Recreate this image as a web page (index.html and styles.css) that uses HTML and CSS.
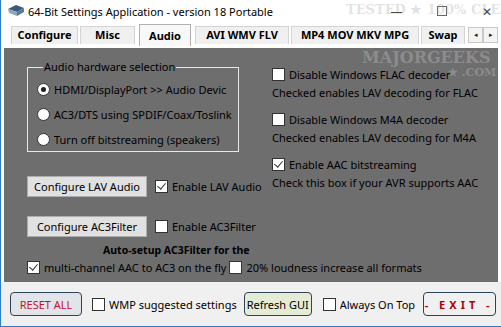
FILE: index.html
```html
<!DOCTYPE html>
<html lang="en">
<head>
    <meta charset="UTF-8">
    <title>64-Bit Settings Application - version 18 Portable</title>
    <link rel="stylesheet" href="styles.css">
</head>
<body>

<div class="window">
    <!-- Title bar -->
    <div class="titlebar">
        <svg class="app-icon" width="18" height="14" viewBox="0 0 18 14">
            <path d="M1 5 L9 1 L17 4 L10 8 Z" fill="#3c5a78"/>
            <path d="M1 5 L10 8 L10 12 L2 9 Z" fill="#8fa8bf"/>
            <path d="M10 8 L17 4 L17 8 L10 12 Z" fill="#5c7896"/>
        </svg>
        <span class="title">64-Bit Settings Application - version 18 Portable</span>
        <div class="controls">
            <span class="ctl">&#8212;</span>
            <span class="ctl"><span class="max"></span></span>
            <span class="ctl close">&#10005;</span>
        </div>
    </div>

    <!-- Tabs -->
    <div class="tabs">
        <div class="tab w-conf">Configure</div>
        <div class="tab w-misc">Misc</div>
        <div class="tab active w-audio">Audio</div>
        <div class="tab w-avi">AVI WMV FLV</div>
        <div class="tab w-mp4">MP4 MOV MKV MPG</div>
        <div class="tab w-swap">Swap</div>
        <div class="tab-arrows">
            <span class="arrow">&#9666;</span>
            <span class="arrow">&#9656;</span>
        </div>
    </div>

    <!-- Audio page -->
    <div class="panel">
        <div class="cols">
            <div class="left">
                <fieldset class="group">
                    <legend>Audio hardware selection</legend>
                    <div class="radio-row"><span class="radio on"></span>HDMI/DisplayPort &gt;&gt; Audio Devic</div>
                    <div class="radio-row"><span class="radio"></span>AC3/DTS using SPDIF/Coax/Toslink</div>
                    <div class="radio-row"><span class="radio"></span>Turn off bitstreaming (speakers)</div>
                </fieldset>

                <div class="btn-row lav">
                    <button class="btn">Configure LAV Audio</button>
                    <span class="check on"></span>Enable LAV Audio
                </div>
                <div class="btn-row ac3">
                    <button class="btn">Configure AC3Filter</button>
                    <span class="check"></span>Enable AC3Filter
                </div>
            </div>

            <div class="right">
                <div class="opt">
                    <div class="check-row"><span class="check"></span>Disable Windows FLAC decoder</div>
                    <div class="hint">Checked enables LAV decoding for FLAC</div>
                </div>
                <div class="opt">
                    <div class="check-row"><span class="check"></span>Disable Windows M4A decoder</div>
                    <div class="hint">Checked enables LAV decoding for M4A</div>
                </div>
                <div class="opt">
                    <div class="check-row"><span class="check on"></span>Enable AAC bitstreaming</div>
                    <div class="hint">Check this box if your AVR supports AAC</div>
                </div>
            </div>
        </div>

        <div class="autosetup">Auto-setup AC3Filter for the following</div>
        <div class="bottom-row">
            <span class="check on"></span>multi-channel AAC to AC3 on the fly
            <span class="check gap"></span>20% loudness increase all formats
        </div>

        <!-- watermark overlay -->
        <div class="wm-big">MAJORGEEKS</div>
        <div class="wm-com">&#9733; .COM</div>
    </div>

    <!-- Footer -->
    <div class="footer">
        <button class="fbtn reset">RESET ALL</button>
        <span class="check"></span><span class="flabel">WMP suggested settings</span>
        <button class="fbtn refresh">Refresh GUI</button>
        <span class="check"></span><span class="flabel clip">Always On Top</span>
        <button class="fbtn exit">- EXIT -</button>
    </div>

    <div class="wm-top">TESTED &#9733; 100% CLEAN</div>
</div>

</body>
</html>
```

FILE: styles.css
```css
body {
    margin: 0;
    font-family: 'Noto Sans', 'Open Sans', sans-serif;
    font-size: 11px;
    color: #000;
    background: #fff;
    white-space: nowrap;
}
.window {
    position: relative;
    width: 500px;
    height: 326px;
    overflow: hidden;
    border-left: 1px solid #2b7bd0;
    border-bottom: 1px solid #2b7bd0;
    background: #fff;
}
.titlebar {
    height: 22px;
    display: flex;
    align-items: center;
    padding-left: 6px;
}
.app-icon {
    margin-right: 3px;
}
.title {
    font-size: 11px;
    color: #000;
}
.controls {
    margin-left: auto;
    margin-right: -8px;
    display: flex;
    color: #444;
}
.ctl {
    width: 45px;
    text-align: center;
    font-size: 12px;
}
.max {
    display: inline-block;
    width: 8px;
    height: 8px;
    border: 1px solid #666;
}
.tabs {
    height: 24px;
    display: flex;
    align-items: flex-end;
    padding-left: 9px;
}
.tab {
    box-sizing: border-box;
    height: 18px;
    line-height: 16px;
    text-align: center;
    background: #f0f0f0;
    border: 1px solid #d4d4d4;
    border-bottom: none;
    font-weight: bold;
    margin: 0 1px 2px 1px;
}
.tab.active {
    height: 22px;
    line-height: 22px;
    margin: 0 3px;
    background: #f8f8f8;
    border-color: #b0b0b0;
}
.w-conf { width: 67px; }
.w-misc { width: 55px; }
.w-audio { width: 52px; }
.w-avi { width: 94px; }
.w-mp4 { width: 128px; }
.w-swap { width: 44px; }
.tab-arrows {
    display: flex;
    margin-left: 2px;
    margin-bottom: 3px;
}
.arrow {
    width: 13px;
    height: 14px;
    border: 1px solid #c8c8c8;
    background: #f4f4f4;
    font-size: 7px;
    line-height: 14px;
    text-align: center;
    color: #222;
}
.panel {
    position: relative;
    margin: 2px 3px 0 3px;
    height: 234px;
    background: #6e6e6f;
    overflow: hidden;
}
.cols {
    display: flex;
}
.left {
    box-sizing: border-box;
    width: 245px;
    flex: none;
    padding-left: 23px;
}
.group {
    box-sizing: border-box;
    width: 212px;
    height: 92px;
    margin: 12px 0 0 0;
    padding: 3px 0 0 9px;
    border: 1px solid #e8e8e8;
}
.group legend {
    padding: 0 1px;
    margin-left: 6px;
    line-height: 14px;
}
.radio-row {
    display: flex;
    align-items: center;
    height: 25px;
}
.radio {
    width: 11px;
    height: 11px;
    border-radius: 50%;
    background: #fff;
    border: 1px solid #333;
    margin-right: 4px;
    position: relative;
}
.radio.on::after {
    content: '';
    position: absolute;
    left: 3px;
    top: 3px;
    width: 5px;
    height: 5px;
    border-radius: 50%;
    background: #222;
}
.check {
    display: inline-block;
    box-sizing: border-box;
    width: 13px;
    height: 13px;
    background: #fff;
    border: 1px solid #333;
    margin-right: 4px;
    position: relative;
    flex: none;
}
.check.on::after {
    content: '';
    position: absolute;
    left: 3px;
    top: 0px;
    width: 4px;
    height: 7px;
    border: solid #333;
    border-width: 0 1.5px 1.5px 0;
    transform: rotate(40deg);
}
.btn-row {
    display: flex;
    align-items: center;
}
.btn-row.lav {
    margin-top: 24px;
}
.btn-row.ac3 {
    margin-top: 19px;
}
.btn {
    font-family: inherit;
    font-size: 11px;
    height: 21px;
    width: 120px;
    flex: none;
    padding: 0;
    background: #e1e1e1;
    border: 1px solid #adadad;
    margin-right: 8px;
}
.right {
    padding-left: 23px;
    padding-top: 19px;
}
.opt {
    margin-bottom: 12px;
}
.check-row {
    display: flex;
    align-items: center;
    height: 14px;
}
.hint {
    margin-top: 5px;
    line-height: 14px;
}
.autosetup {
    font-weight: bold;
    font-size: 10.5px;
    width: 150px;
    height: 13px;
    line-height: 12px;
    margin: 7px 0 0 99px;
    overflow: hidden;
    white-space: normal;
}
.bottom-row {
    display: flex;
    align-items: center;
    margin: 3px 0 0 23px;
    height: 14px;
}
.check.gap {
    margin-left: 3px;
}
.footer {
    height: 44px;
    background: #f0f0f0;
    display: flex;
    align-items: center;
    padding-left: 9px;
}
.fbtn {
    font-family: inherit;
    font-size: 11px;
    height: 24px;
    border: 1px solid #2e4258;
    border-radius: 4px;
    padding: 0;
    flex: none;
}
.reset {
    width: 72px;
    background: #e1e4e8;
    color: #c41230;
    margin-right: 10px;
}
.refresh {
    width: 68px;
    background: #e4ecd6;
    margin: 0 11px 0 7px;
}
.exit {
    width: 73px;
    background: #f0f0f0;
    color: #b0000c;
    font-weight: bold;
    letter-spacing: 4px;
    margin-left: 7px;
}
.flabel.clip {
    width: 76px;
    overflow: hidden;
}
.wm-top {
    position: absolute;
    top: 2px;
    left: 345px;
    font-family: 'DejaVu Serif', serif;
    font-weight: bold;
    font-size: 13px;
    color: rgba(140, 140, 140, 0.25);
}
.wm-big {
    position: absolute;
    top: 0px;
    left: 358px;
    font-family: 'DejaVu Serif', serif;
    font-weight: bold;
    font-size: 16px;
    color: rgba(200, 200, 200, 0.35);
}
.wm-com {
    position: absolute;
    top: 18px;
    left: 444px;
    font-family: 'DejaVu Serif', serif;
    font-weight: bold;
    font-size: 11px;
    color: rgba(200, 200, 200, 0.35);
}
```
